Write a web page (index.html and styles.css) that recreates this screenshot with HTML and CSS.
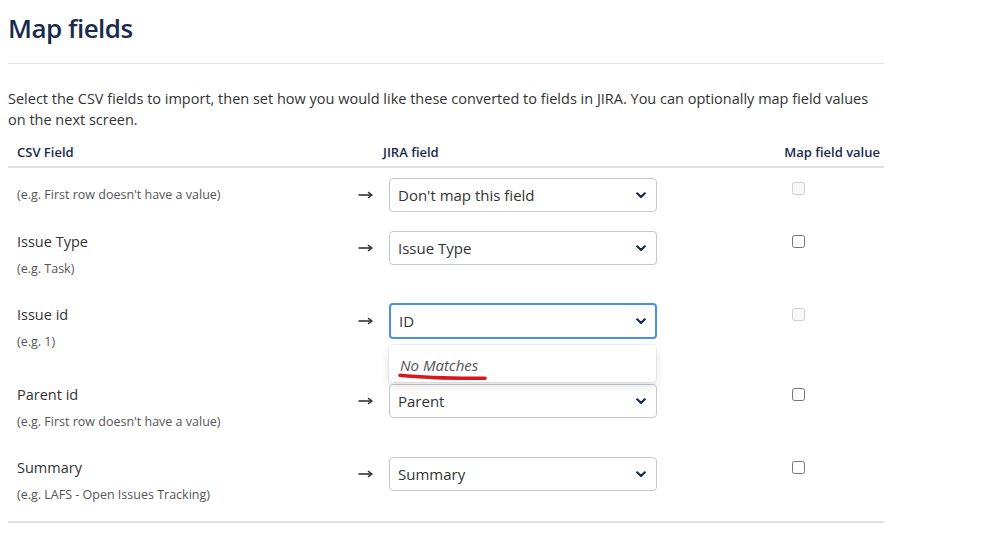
FILE: index.html
```html
<!DOCTYPE html>
<html>
<head>
<meta charset="utf-8">
<title>Map fields</title>
<link rel="stylesheet" href="styles.css">
</head>
<body>
<main class="page">
  <h1 class="title">Map fields</h1>
  <hr class="rule">
  <p class="intro">Select the CSV fields to import, then set how you would like these converted to fields in JIRA. You can optionally map field values on the next screen.</p>

  <div class="mapping">
    <div class="grid head">
      <div class="hcell">CSV Field</div>
      <div class="hcell hcell-jira">JIRA field</div>
      <div class="hcell hcell-value">Map field value</div>
    </div>

    <div class="rows">
      <div class="grid row row-single">
        <div class="field"><div class="hint">(e.g. First row doesn't have a value)</div></div>
        <div class="arrow"><svg width="15" height="8" viewBox="0 0 15 8"><path d="M0.5 4 H13" stroke="#333" stroke-width="1.6"/><path d="M10 1.2 L14 4 L10 6.8" fill="none" stroke="#333" stroke-width="1.5" stroke-linejoin="round"/></svg></div>
        <div class="select"><span>Don't map this field</span><svg class="chev" width="10" height="7" viewBox="0 0 10 7"><path d="M1.2 1.3 L5 5 L8.8 1.3" fill="none" stroke="#172b4d" stroke-width="2.2" stroke-linecap="round" stroke-linejoin="round"/></svg></div>
        <div class="check"><input type="checkbox" disabled></div>
      </div>

      <div class="grid row row-2">
        <div class="field"><div class="label">Issue Type</div><div class="hint">(e.g. Task)</div></div>
        <div class="arrow"><svg width="15" height="8" viewBox="0 0 15 8"><path d="M0.5 4 H13" stroke="#333" stroke-width="1.6"/><path d="M10 1.2 L14 4 L10 6.8" fill="none" stroke="#333" stroke-width="1.5" stroke-linejoin="round"/></svg></div>
        <div class="select"><span>Issue Type</span><svg class="chev" width="10" height="7" viewBox="0 0 10 7"><path d="M1.2 1.3 L5 5 L8.8 1.3" fill="none" stroke="#172b4d" stroke-width="2.2" stroke-linecap="round" stroke-linejoin="round"/></svg></div>
        <div class="check"><input type="checkbox"></div>
      </div>

      <div class="grid row row-3">
        <div class="field field-focus"><div class="label">Issue id</div><div class="hint">(e.g. 1)</div></div>
        <div class="arrow arrow-focus"><svg width="15" height="8" viewBox="0 0 15 8"><path d="M0.5 4 H13" stroke="#333" stroke-width="1.6"/><path d="M10 1.2 L14 4 L10 6.8" fill="none" stroke="#333" stroke-width="1.5" stroke-linejoin="round"/></svg></div>
        <div class="select-wrap">
          <div class="select select-focus"><span>ID</span><svg class="chev" width="10" height="7" viewBox="0 0 10 7"><path d="M1.2 1.3 L5 5 L8.8 1.3" fill="none" stroke="#172b4d" stroke-width="2.2" stroke-linecap="round" stroke-linejoin="round"/></svg></div>
          <div class="menu">
            <span class="nomatch">No Matches</span>
            <svg class="scribble" width="96" height="12" viewBox="0 0 96 12"><path d="M3 4.2 C 25 6.5, 55 7.5, 88 7.2" fill="none" stroke="#d9161c" stroke-width="3.6" stroke-linecap="round"/></svg>
          </div>
        </div>
        <div class="check check-focus"><input type="checkbox" disabled></div>
      </div>

      <div class="grid row row-4">
        <div class="field"><div class="label">Parent id</div><div class="hint">(e.g. First row doesn't have a value)</div></div>
        <div class="arrow"><svg width="15" height="8" viewBox="0 0 15 8"><path d="M0.5 4 H13" stroke="#333" stroke-width="1.6"/><path d="M10 1.2 L14 4 L10 6.8" fill="none" stroke="#333" stroke-width="1.5" stroke-linejoin="round"/></svg></div>
        <div class="select"><span>Parent</span><svg class="chev" width="10" height="7" viewBox="0 0 10 7"><path d="M1.2 1.3 L5 5 L8.8 1.3" fill="none" stroke="#172b4d" stroke-width="2.2" stroke-linecap="round" stroke-linejoin="round"/></svg></div>
        <div class="check"><input type="checkbox"></div>
      </div>

      <div class="grid row row-5">
        <div class="field"><div class="label">Summary</div><div class="hint">(e.g. LAFS - Open Issues Tracking)</div></div>
        <div class="arrow"><svg width="15" height="8" viewBox="0 0 15 8"><path d="M0.5 4 H13" stroke="#333" stroke-width="1.6"/><path d="M10 1.2 L14 4 L10 6.8" fill="none" stroke="#333" stroke-width="1.5" stroke-linejoin="round"/></svg></div>
        <div class="select"><span>Summary</span><svg class="chev" width="10" height="7" viewBox="0 0 10 7"><path d="M1.2 1.3 L5 5 L8.8 1.3" fill="none" stroke="#172b4d" stroke-width="2.2" stroke-linecap="round" stroke-linejoin="round"/></svg></div>
        <div class="check"><input type="checkbox"></div>
      </div>
    </div>
  </div>
</main>
</body>
</html>
```

FILE: styles.css
```css
* { box-sizing: border-box; }

html, body {
  margin: 0;
  padding: 0;
  background: #ffffff;
}

body {
  font-family: "Open Sans", "Noto Sans", "Liberation Sans", sans-serif;
  color: #333333;
}

.page {
  width: 884px;
  padding: 0 0 0 8px;
}

.title {
  margin: 0;
  padding-top: 10px;
  font-size: 26px;
  line-height: 36px;
  font-weight: 600;
  color: #172b4d;
  letter-spacing: -0.5px;
}

.rule {
  margin: 17px 0 0 0;
  border: 0;
  border-top: 1px solid #e1e3e6;
  height: 0;
}

.intro {
  margin: 24px 0 0 0;
  font-size: 14.5px;
  line-height: 21px;
  color: #333333;
}

.mapping {
  margin-top: 12px;
}

.grid {
  display: grid;
  grid-template-columns: 340px 32px 268px 1fr;
  padding: 0 4px 0 9px;
}

.head {
  border-bottom: 2px solid #dfe1e5;
  padding-bottom: 4px;
}

.hcell {
  font-size: 13px;
  line-height: 20px;
  font-weight: 600;
  color: #172b4d;
}

.hcell-jira {
  grid-column: 2 / 4;
  padding-left: 26px;
}

.hcell-value {
  text-align: right;
}

.rows {
  padding-top: 10px;
  border-bottom: 2px solid #dfe1e5;
}

.row-single { padding-bottom: 19px; }
.row-2 { padding-bottom: 24px; }
.row-3 { padding-bottom: 32px; }
.row-4 { padding-bottom: 25px; }
.row-5 { padding-bottom: 16px; }

.field {
  display: flex;
  flex-direction: column;
}

.field-focus {
  padding-top: 1px;
}

.row-single .field {
  justify-content: center;
}

.label {
  font-size: 14.5px;
  line-height: 22px;
  color: #333333;
}

.hint {
  font-size: 12.5px;
  line-height: 20px;
  color: #555555;
}

.label + .hint {
  margin-top: 6px;
}

.arrow {
  height: 34px;
  display: flex;
  align-items: center;
  padding-left: 1px;
}

.arrow-focus {
  height: 36px;
}

.select {
  height: 34px;
  border: 1px solid #c4c7cc;
  border-radius: 4px;
  display: flex;
  align-items: center;
  justify-content: space-between;
  padding: 0 10px 0 8px;
  font-size: 15px;
  color: #333333;
  background: #ffffff;
}

.select-wrap {
  position: relative;
}

.select-focus {
  height: 36px;
  border: 2px solid #4a8fe6;
  border-radius: 4px;
  padding-left: 8px;
  padding-right: 9px;
}

.menu {
  position: absolute;
  left: 0;
  top: 42px;
  width: 267px;
  height: 37px;
  background: #ffffff;
  border-radius: 4px;
  box-shadow: 0 0 0 1px rgba(0, 0, 0, 0.05), 0 4px 10px rgba(0, 0, 0, 0.12);
  padding-left: 11px;
  z-index: 2;
}

.nomatch {
  display: block;
  font-style: italic;
  font-size: 15px;
  line-height: 40px;
  color: #555555;
}

.scribble {
  position: absolute;
  left: 8px;
  top: 26px;
}

.check {
  padding-left: 135px;
}

.check input {
  margin: 3px 0 0 0;
  width: 13px;
  height: 13px;
}

.check-focus input {
  margin-top: 5px;
}
```
